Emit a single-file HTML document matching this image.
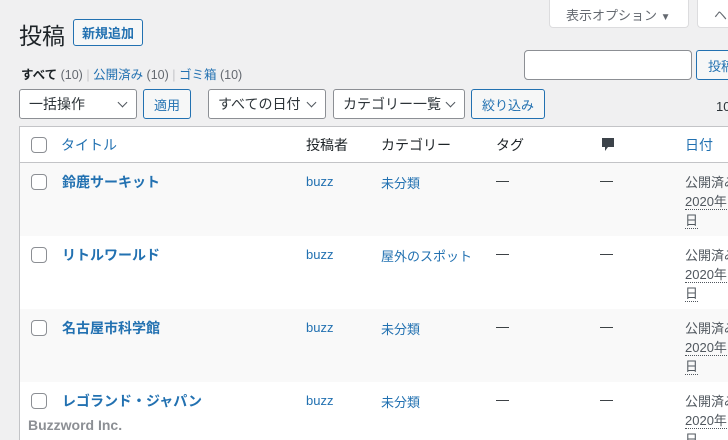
<!DOCTYPE html>
<html><head><meta charset="utf-8"><style>
*{box-sizing:border-box;margin:0;padding:0}
html,body{width:728px;height:440px;overflow:hidden}
body{background:#f0f0f1;font-family:"Liberation Sans","Noto Sans CJK JP",sans-serif;color:#1d2327;font-size:13px;white-space:nowrap}
#w{position:relative;width:728px;height:440px;overflow:hidden}
.a{position:absolute}
.btn{position:absolute;border:1px solid #2271b1;color:#2271b1;background:#f6f7f7;border-radius:3px;font-size:13px;display:flex;align-items:center;justify-content:center}
.sel{position:absolute;border:1px solid #8c8f94;background:#fff;border-radius:3px;font-size:14px;color:#2c3338;padding-left:9px;display:flex;align-items:center}
.sel::after{content:"";position:absolute;right:10px;top:9px;width:6px;height:6px;border-right:1.6px solid #50575e;border-bottom:1.6px solid #50575e;transform:rotate(45deg)}
.tab{position:absolute;left:19px;top:126px;width:720px;background:#fff;border:1px solid #c3c4c7}
.cb{position:absolute;width:16px;height:16px;border:1px solid #8c8f94;border-radius:4px;background:#fff}
.row{position:relative;height:73px}
.row.o{background:#f9f9f9}
.blue{color:#2271b1}
.t{position:absolute;top:10px;font-size:13px}
.ttl{font-weight:bold;font-size:14px;color:#2271b1;left:42px;top:9px}
.d{position:absolute;left:665px;top:10px;font-size:13px;line-height:19px;color:#50575e;white-space:nowrap}
.d span{color:#50575e;border-bottom:1px dotted #50575e}
</style></head><body><div id="w">
<div class="a" style="left:549px;top:0;width:140px;height:28px;background:#fff;border:1px solid #dcdcde;border-top:none;border-radius:0 0 4px 4px;font-size:13px;color:#646970;padding:5px 0 0 16px">表示オプション <span style="font-size:10px">▼</span></div>
<div class="a" style="left:697px;top:0;width:31px;height:28px;background:#fff;border:1px solid #dcdcde;border-right:none;border-top:none;border-radius:0 0 0 4px;font-size:13px;color:#646970;padding:5px 0 0 16px;overflow:hidden">ヘルプ</div>
<div class="a" style="left:19px;top:17px;font-size:23px;color:#1d2327">投稿</div>
<div class="btn" style="left:73px;top:19px;width:70px;height:27px;font-size:13px;font-weight:bold;color:#2271b1">新規追加</div>
<div class="a" style="left:21px;top:64px;font-size:12.5px;color:#646970"><b style="color:#1d2327">すべて</b> (10) <span style="color:#c3c4c7">|</span> <span class="blue">公開済み</span> (10) <span style="color:#c3c4c7">|</span> <span class="blue">ゴミ箱</span> (10)</div>
<div class="a" style="left:524px;top:50px;width:168px;height:30px;background:#fff;border:1px solid #8c8f94;border-radius:4px"></div>
<div class="btn" style="left:696px;top:50px;width:32px;height:30px;justify-content:flex-start;padding-left:11px;overflow:hidden;border-right:none;border-radius:3px 0 0 3px">投稿を検索</div>
<div class="sel" style="left:19px;top:89px;width:118px;height:30px">一括操作</div>
<div class="btn" style="left:143px;top:89px;width:48px;height:30px">適用</div>
<div class="sel" style="left:208px;top:89px;width:118px;height:30px">すべての日付</div>
<div class="sel" style="left:333px;top:89px;width:132px;height:30px">カテゴリー一覧</div>
<div class="btn" style="left:471px;top:89px;width:74px;height:30px">絞り込み</div>
<div class="a" style="left:716px;top:96px;font-size:13px;color:#2c3338">10 個の項目</div>
<div class="tab">
 <div class="row" style="height:36px;border-bottom:1px solid #c3c4c7">
  <div class="cb" style="left:11px;top:10px"></div>
  <div class="t blue" style="left:41px;top:8px;font-size:14px">タイトル</div>
  <div class="t" style="left:286px;top:8px;font-size:14px">投稿者</div>
  <div class="t" style="left:361px;top:8px;font-size:14px">カテゴリー</div>
  <div class="t" style="left:476px;top:8px;font-size:14px">タグ</div>
  <svg class="a" style="left:581px;top:10px" width="14" height="16" viewBox="0 0 14 16"><path d="M1 1h12v9H7l-3 4v-4H1z" fill="#3c434a"/></svg>
  <div class="t blue" style="left:665px;top:8px;font-size:14px">日付</div>
 </div>
 <div class="row o"><div class="cb" style="left:11px;top:11px"></div><div class="t ttl">鈴鹿サーキット</div><div class="t blue" style="left:286px;top:11px">buzz</div><div class="t blue" style="left:361px">未分類</div><div class="t" style="left:476px">—</div><div class="t" style="left:580px">—</div><div class="d">公開済み<br><span>2020年</span><br><span>日</span></div></div>
 <div class="row"><div class="cb" style="left:11px;top:11px"></div><div class="t ttl">リトルワールド</div><div class="t blue" style="left:286px;top:11px">buzz</div><div class="t blue" style="left:361px">屋外のスポット</div><div class="t" style="left:476px">—</div><div class="t" style="left:580px">—</div><div class="d">公開済み<br><span>2020年</span><br><span>日</span></div></div>
 <div class="row o"><div class="cb" style="left:11px;top:11px"></div><div class="t ttl">名古屋市科学館</div><div class="t blue" style="left:286px;top:11px">buzz</div><div class="t blue" style="left:361px">未分類</div><div class="t" style="left:476px">—</div><div class="t" style="left:580px">—</div><div class="d">公開済み<br><span>2020年</span><br><span>日</span></div></div>
 <div class="row"><div class="cb" style="left:11px;top:11px"></div><div class="t ttl">レゴランド・ジャパン</div><div class="t blue" style="left:286px;top:11px">buzz</div><div class="t blue" style="left:361px">未分類</div><div class="t" style="left:476px">—</div><div class="t" style="left:580px">—</div><div class="d">公開済み<br><span>2020年</span><br><span>日</span></div></div>
</div>
<div class="a" style="left:28px;top:417px;font-size:14px;font-weight:bold;color:#8c8f94">Buzzword Inc.</div>
</div></body></html>
